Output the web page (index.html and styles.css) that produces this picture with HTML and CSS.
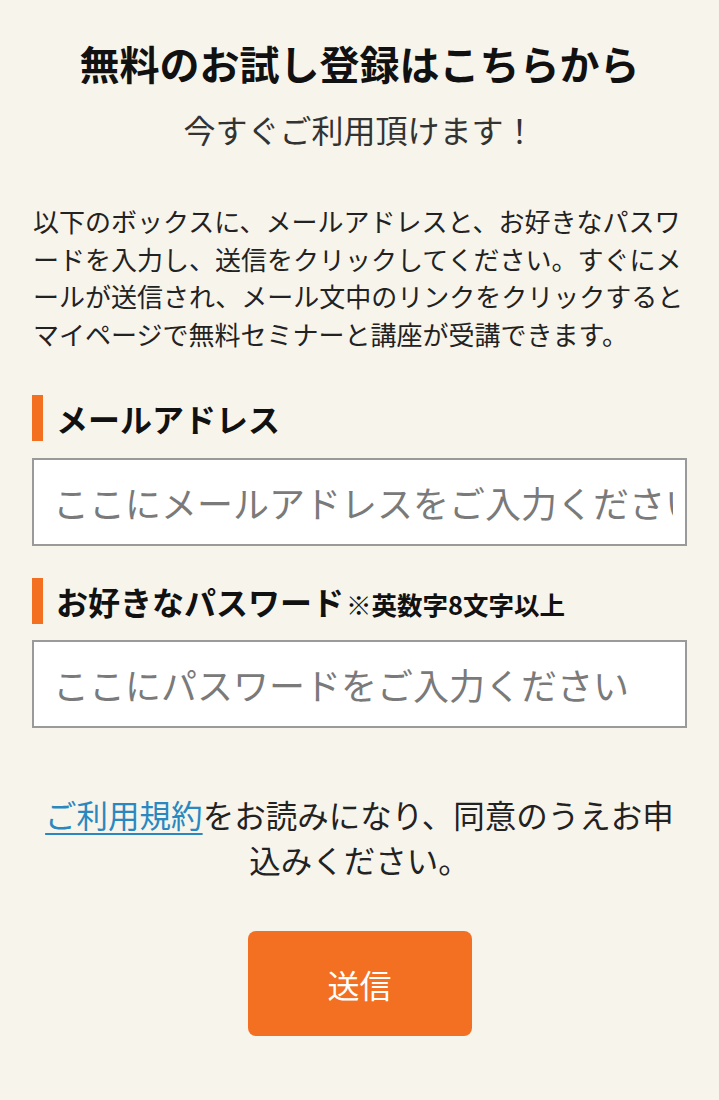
FILE: index.html
```html
<!DOCTYPE html>
<html lang="ja">
<head>
<meta charset="utf-8">
<title>無料のお試し登録</title>
<link rel="stylesheet" href="styles.css">
</head>
<body>
<main class="signup">
  <h1 class="signup__title">無料のお試し登録はこちらから</h1>
  <p class="signup__lead">今すぐご利用頂けます！</p>
  <p class="signup__intro">以下のボックスに、メールアドレスと、お好きなパスワードを入力し、送信をクリックしてください。すぐにメールが送信され、メール文中のリンクをクリックするとマイページで無料セミナーと講座が受講できます。</p>

  <div class="field">
    <h2 class="field__label">メールアドレス</h2>
    <input class="field__input" type="email" placeholder="ここにメールアドレスをご入力ください">
  </div>

  <div class="field field--second">
    <h2 class="field__label">お好きなパスワード<span class="field__note">※英数字8文字以上</span></h2>
    <input class="field__input" type="password" placeholder="ここにパスワードをご入力ください">
  </div>

  <p class="signup__terms"><a class="signup__link" href="#">ご利用規約</a>をお読みになり、同意のうえお申込みください。</p>

  <div class="signup__actions">
    <button class="signup__submit" type="submit">送信</button>
  </div>
</main>
</body>
</html>
```

FILE: styles.css
```css
* { box-sizing: border-box; }

html, body {
  margin: 0;
  padding: 0;
  background: #f7f4ec;
}

body {
  font-family: "Noto Sans CJK JP", "Noto Sans", sans-serif;
  color: #222;
  line-break: loose;
}

.signup {
  padding: 0 32px 40px 32px;
}

.signup__title {
  margin: 33px 0 0;
  font-size: 40px;
  line-height: 60px;
  font-weight: 700;
  text-align: center;
  color: #111;
  white-space: nowrap;
}

.signup__lead {
  margin: 12px 0 0;
  font-size: 32px;
  line-height: 48px;
  text-align: center;
  color: #333;
}

.signup__intro {
  margin: 49px 0 0;
  padding-left: 1px;
  font-size: 26px;
  line-height: 37.5px;
  color: #222;
  line-break: loose;
}

.field {
  margin-top: 43px;
  display: flex;
  flex-direction: column;
  gap: 17px;
}

.field--second {
  margin-top: 32px;
  gap: 16px;
}

.field__label {
  margin: 0;
  height: 46px;
  display: flex;
  align-items: center;
  border-left: 11px solid #f37021;
  padding-left: 13px;
  font-size: 32px;
  font-weight: 700;
  color: #111;
  white-space: nowrap;
}

.field__note {
  font-size: 25.5px;
  font-weight: 700;
  margin-left: 2px;
  padding-top: 4px;
}

.field__input {
  display: block;
  width: 100%;
  height: 88px;
  margin: 0;
  padding: 0 12px 0 19px;
  border: 2px solid #9a9a9a;
  border-radius: 0;
  background: #fff;
  font-family: "Noto Sans CJK JP", "Noto Sans", sans-serif;
  font-size: 36px;
  color: #222;
  outline: none;
}

.field__input::placeholder {
  color: #7a7a7a;
  opacity: 1;
}

.signup__terms {
  margin: 64px 0 0;
  font-size: 31.5px;
  line-height: 45px;
  text-align: center;
  color: #222;
}

.signup__link {
  color: #2a88c0;
  text-decoration: underline;
  text-decoration-thickness: 2px;
  text-underline-offset: 5px;
}

.signup__actions {
  margin-top: 49px;
  display: flex;
  justify-content: center;
}

.signup__submit {
  width: 224px;
  height: 105px;
  border: 0;
  border-radius: 8px;
  background: #f36f21;
  color: #fff;
  font-family: "Noto Sans CJK JP", "Noto Sans", sans-serif;
  font-size: 32px;
  cursor: pointer;
}
```
